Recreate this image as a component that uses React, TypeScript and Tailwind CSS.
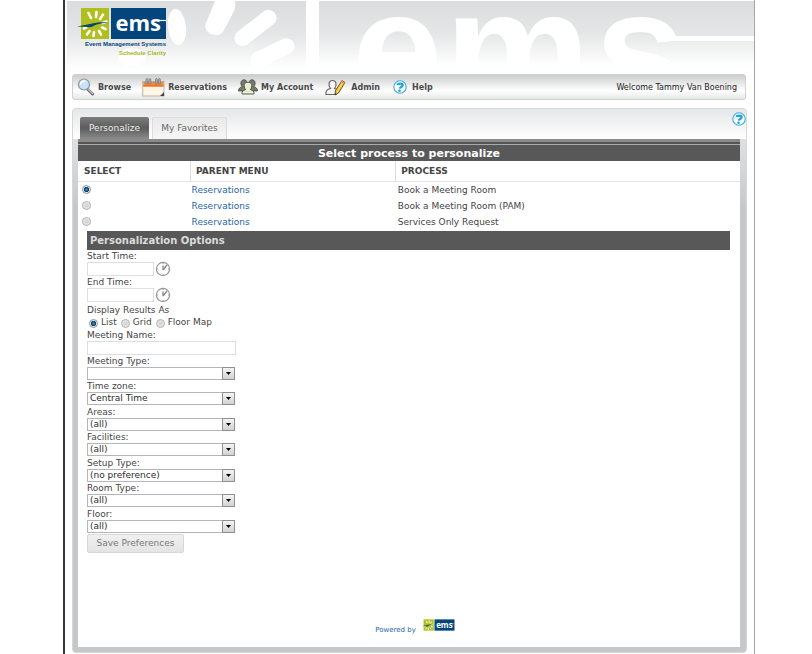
import React, { useId, useState } from "react";

const verdana = "font-['DejaVu_Sans',Verdana,sans-serif]";

function EmsMark({ className }: { className: string }) {
  return (
    <svg viewBox="0 0 90 33" className={className} aria-label="ems" role="img">
      <rect x="4" y="1" width="28" height="31" fill="#b1bf1e" />
      <rect x="34" y="1" width="55" height="31" fill="#04467b" />
      <g stroke="#fff" strokeWidth="2.6" strokeLinecap="round">
        <path d="M14 11l-2.500-5M19 10l.500-5M23 12l3-4.500M25.500 16l4-1.500M25 20.500l3.500 1.500M22 24l2 3.500M17 25l-.500 4M12.500 24l-2.500 3.500M9 20.500l-2 1" />
      </g>
      <path d="M0 19.500L13 17c5-1.300 10-2 19-1.600-7 .3-12 1.300-16.500 4.200-1.500 1-3 .9-4.500.4z" fill="#04467b" />
      <text x="38.500" y="24" fontSize="22" fontWeight="700" fill="#fff" fontFamily="'Open Sans', sans-serif">
        ems
      </text>
      <path d="M82 13.500h7" stroke="#fff" strokeWidth="1.200" />
    </svg>
  );
}

function Banner() {
  return (
    <svg className="absolute inset-x-0 top-px h-[73px] w-full" viewBox="65 1 689 73" preserveAspectRatio="xMinYMin slice" aria-hidden="true">
      <defs>
        <linearGradient id="sky" x1="0" y1="0" x2="0" y2="1">
          <stop offset="0" stopColor="#dbdcde" />
          <stop offset="0.500" stopColor="#e5e6e7" />
          <stop offset="1" stopColor="#ffffff" />
        </linearGradient>
      </defs>
      <rect x="67" y="1" width="239" height="68" fill="url(#sky)" />
      <rect x="319" y="1" width="435" height="65" fill="url(#sky)" />
      <g fill="#fff">
        <ellipse cx="177" cy="27" rx="9" ry="18" transform="rotate(-6 177 27)" />
        <path d="M215 1h20c1 4 0 8-2 12l-9 17c-3 6-9 6-13 4-4-2-7-5-5-11z" />
        <rect x="231" y="20" width="49" height="16" rx="8" transform="rotate(-38 255.500 28)" />
        <rect x="249" y="45" width="47" height="16" rx="8" transform="rotate(-26 272.500 53)" />
        <ellipse cx="132" cy="57" rx="14" ry="9" />
        <rect x="660" y="36" width="94" height="5" />
      </g>
      <text y="105" fontSize="163" fontWeight="700" fill="#fff" fontFamily="'Liberation Sans', Arial, sans-serif">
        <tspan x="352">e</tspan>
        <tspan x="445">m</tspan>
        <tspan x="595">s</tspan>
      </text>
    </svg>
  );
}

function MagnifierIcon() {
  return (
    <svg viewBox="0 0 18 18" className="h-[18px] w-[18px]" aria-hidden="true">
      <path d="M10.500 11l5 5" stroke="#666" strokeWidth="3" strokeLinecap="round" />
      <path d="M11 11l4.500 4.500" stroke="#c9c9c9" strokeWidth="1.200" strokeLinecap="round" />
      <circle cx="7" cy="6.500" r="5.500" fill="#c5e4f7" stroke="#8a9299" strokeWidth="1.200" />
      <path d="M3.500 6.500a3.500 3.500 0 0 1 5-3" stroke="#fff" strokeWidth="1.500" fill="none" />
    </svg>
  );
}

function CalendarIcon() {
  return (
    <svg viewBox="0 0 23 19" className="h-[19px] w-[23px]" aria-hidden="true">
      <rect x=".8" y="3.500" width="21.200" height="14.500" fill="#fdf6e6" stroke="#a9a59c" strokeWidth=".8" />
      <rect x="1.200" y="3.900" width="20.400" height="4.600" fill="#f5893c" />
      <rect x="1.200" y="7.200" width="20.400" height="1.300" fill="#ec6d21" />
      <path d="M22 14v4h-4z" fill="#444" />
      <g fill="#b9b9b9" stroke="#6f6f6f" strokeWidth=".7">
        <rect x="4" y=".6" width="1.800" height="5.500" rx=".9" />
        <rect x="7" y=".6" width="1.800" height="5.500" rx=".9" />
        <rect x="13.500" y=".6" width="1.800" height="5.500" rx=".9" />
        <rect x="16.500" y=".6" width="1.800" height="5.500" rx=".9" />
      </g>
    </svg>
  );
}

function PeopleIcon() {
  return (
    <svg viewBox="0 0 20 16" className="h-4 w-5" aria-hidden="true">
      <g fill="#77786f" stroke="#454545" strokeWidth=".8">
        <path d="M.500 12c0-3 2-3.500 3.500-4.500C1.800 4.500 3 .800 6 .800S9.800 4 8 7l2 5z" />
        <path d="M19.500 12c0-3-2-3.500-3.500-4.500C18.200 4.500 17 .800 14 .800S10.200 4 12 7l-2 5z" />
      </g>
      <path d="M4 15c-.5-3 1.500-3.600 3.600-4.300C5 7 6.300 3.200 10 3.200s5 3.800 2.400 7.500C14.500 11.400 16.500 12 16 15z" fill="#e6efd0" stroke="#5a5d50" strokeWidth="1" />
    </svg>
  );
}

function AdminIcon() {
  return (
    <svg viewBox="-1 0 24 17" className="h-[17px] w-6" aria-hidden="true">
      <path d="M1 15.500c-.6-4 1.500-5.500 4.500-6C2.800 5.500 4 1.500 7.500 1.500s5 4 2 8l2.500 1-1 5z" fill="#f5f5f5" stroke="#666" strokeWidth="1.200" />
      <path d="M17 1.500l3 2L13.500 14 10 16l.300-4z" fill="#f8b738" stroke="#59502f" strokeWidth=".9" />
      <path d="M17.500 4l-5.500 9" stroke="#ffe14a" strokeWidth="1.200" />
      <path d="M17 1.500l3 2-1 1.600-3-2z" fill="#e98a4a" />
      <path d="M10 16l.200-2 1.300 1z" fill="#222" />
    </svg>
  );
}

function HelpIcon() {
  return (
    <svg viewBox="0 0 14 14" className="h-[14px] w-[14px]" aria-hidden="true">
      <circle cx="7" cy="7" r="6.200" fill="#fff" stroke="#35aee2" strokeWidth="1.100" />
      <path d="M4.500 5C5 3 9.800 3 9.600 5.300 9.400 7 7.100 6.800 6.800 8.600" stroke="#1fa2dc" strokeWidth="2.300" fill="none" />
      <circle cx="6.500" cy="10.700" r="1.300" fill="#1fa2dc" />
    </svg>
  );
}

function ClockIcon() {
  return (
    <svg viewBox="0 0 16 16" className="h-4 w-4" aria-hidden="true">
      <circle cx="8" cy="8" r="6.600" fill="#fff" stroke="#999" strokeWidth="1.200" />
      <path d="M8 9V4.500M8 9l4-5" stroke="#888" strokeWidth="1.300" fill="none" />
      <path d="M8 2v1.200M8 13v1.200M2 8h1.200M13 8h1.200" stroke="#999" strokeWidth=".9" />
    </svg>
  );
}

function MenuLink({ icon, children }: { icon: React.ReactNode; children: string }) {
  return (
    <a href="#" className="flex items-center gap-[3px] text-[8px] font-bold text-[#4a4a4a]">
      {icon}
      <span className="pt-px">{children}</span>
    </a>
  );
}

function Radio({ name, label, checked, onChange }: { name: string; label: string; checked: boolean; onChange: () => void }) {
  return (
    <input
      type="radio"
      name={name}
      aria-label={label}
      checked={checked}
      onChange={onChange}
      className="block h-[9px] w-[9px] shrink-0 appearance-none rounded-full border border-[#b0b0b0] bg-[radial-gradient(circle,#d0d0d0,#f2f2f2)] checked:border-[#8b9299] checked:bg-[radial-gradient(circle,#2f86b5_15%,#0e3a5c_45%,#e6edf2_60%)]"
    />
  );
}

function TimeField({ label }: { label: string }) {
  const id = useId();
  return (
    <div className="h-[26px]">
      <label htmlFor={id} className="block h-3 leading-3">{label}</label>
      <div className="flex h-[14px] items-center gap-px">
        <input id={id} type="text" className="h-[14px] w-[67px] border border-[#dedfe4] bg-white px-1 text-[9px]" />
        <button type="button" aria-label={`Pick ${label}`} className="h-4 w-4">
          <ClockIcon />
        </button>
      </div>
    </div>
  );
}

function SelectField({ label, value }: { label: string; value: string }) {
  const id = useId();
  return (
    <div>
      <label htmlFor={id} className="block h-3 leading-3">{label}</label>
      <div className="relative w-[148px]">
        <select id={id} className="block h-[13px] w-full appearance-none border border-[#b4b5bb] bg-white pr-4 pl-[2px] text-[9px] leading-[11px] text-[#2c2c2c]">
          <option>{value}</option>
        </select>
        <span className="pointer-events-none absolute top-0 right-0 flex h-[13px] w-[13px] items-center justify-center border border-[#8e8f8f] bg-linear-to-b from-[#f4f4f4] to-[#d2d2d2]">
          <svg viewBox="0 0 5 3" className="h-[3px] w-[5px]" aria-hidden="true">
            <path d="M0 0h5L2.500 3z" fill="#000" />
          </svg>
        </span>
      </div>
    </div>
  );
}

const processes = ["Book a Meeting Room", "Book a Meeting Room (PAM)", "Services Only Request"];
const views = ["List", "Grid", "Floor Map"];
const filters = [
  ["Meeting Type:", ""],
  ["Time zone:", "Central Time"],
  ["Areas:", "(all)"],
  ["Facilities:", "(all)"],
  ["Setup Type:", "(no preference)"],
  ["Room Type:", "(all)"],
  ["Floor:", "(all)"],
];

export default function App() {
  const [process, setProcess] = useState(0);
  const [view, setView] = useState(0);

  return (
    <div className={`min-h-screen bg-white pr-[57px] pl-[63px] text-[9px] text-[#444] ${verdana}`}>
      <div className="flex min-h-screen flex-col border-r border-l-2 border-r-[#a6a6a6] border-l-[#353535]">
        <header className="relative h-[74px] overflow-hidden pt-[7px] pl-3">
          <Banner />
          <div className="relative w-[90px]">
            <EmsMark className="block h-[33px] w-[90px]" />
            <div className="pr-px text-right font-['Liberation_Sans',Arial,sans-serif] text-[6px] leading-[9px] font-bold whitespace-nowrap">
              <div className="text-[#04467b]">Event Management Systems</div>
              <div className="text-[#a9b61b]">Schedule Clarity</div>
            </div>
          </div>
        </header>

        <nav className="relative mr-2 ml-[7px] flex h-[26px] items-center gap-[11px] rounded-[3px] border border-[#cfd0d1] bg-linear-to-b from-[#cccdce] via-white via-65% to-[#e6e7e7] pr-2 pl-1">
          <MenuLink icon={<MagnifierIcon />}>Browse</MenuLink>
          <MenuLink icon={<CalendarIcon />}>Reservations</MenuLink>
          <MenuLink icon={<PeopleIcon />}>My Account</MenuLink>
          <MenuLink icon={<AdminIcon />}>Admin</MenuLink>
          <MenuLink icon={<span className="px-[2px]"><HelpIcon /></span>}>Help</MenuLink>
          <span className="ml-auto pt-px text-[8px] text-[#222]">Welcome Tammy Van Boening</span>
        </nav>

        <main className="mt-2 mr-[7px] mb-px ml-[7px] flex grow flex-col rounded-[4px] border border-[#d6d7d8] bg-[linear-gradient(#e6e7e8,#dcddde_40px,#c6c7c8_100px)] pr-[6px] pb-[5px] pl-[5px]">
          <div className="-mr-[6px] -ml-[5px] flex h-[30px] items-end gap-[3px] rounded-t-[4px] bg-linear-to-b from-[#e6e7e8] to-white pl-[7px]">
            <button type="button" className="h-[22px] w-[69px] rounded-t-[2px] bg-linear-to-b from-[#7d7d7d] via-[#5c5c5c] to-[#8c8c8c] pt-[2px] text-[#ededed]">
              Personalize
            </button>
            <button type="button" className="h-[22px] w-[75px] rounded-t-[2px] border border-b-0 border-[#dcdcdc] bg-linear-to-b from-[#e9e9e9] to-[#f6f6f6] pt-px text-[#666]">
              My Favorites
            </button>
            <a href="#" aria-label="Page help" className="mb-[13px] ml-auto">
              <HelpIcon />
            </a>
          </div>
          <div className="h-[6px] bg-[linear-gradient(#8a8a8a_50%,#555_50%_84%,#aaa_84%)]" />

          <section className="flex grow flex-col bg-white">
            <table className="w-full table-fixed border-collapse text-left">
              <caption className="h-4 bg-[#585858] text-center text-[11px] leading-[17px] font-bold text-white">
                Select process to personalize
              </caption>
              <colgroup>
                <col className="w-[17%]" />
                <col className="w-[31%]" />
                <col />
              </colgroup>
              <thead>
                <tr className="h-5 border-b border-[#e4e4e4]">
                  <th className="pt-[2px] pl-[6px] font-bold">SELECT</th>
                  <th className="border-l border-[#dcdcdc] pt-[2px] pl-[5px] font-bold">PARENT MENU</th>
                  <th className="border-l border-[#dcdcdc] pt-[2px] pl-[5px] font-bold">PROCESS</th>
                </tr>
              </thead>
              <tbody>
                {processes.map((name, i) => (
                  <tr key={name} className="h-4 leading-4">
                    <td className="pl-1">
                      <Radio name="process" label={name} checked={process === i} onChange={() => setProcess(i)} />
                    </td>
                    <td className="pl-px">
                      <a href="#" className="text-[#2764a8]">Reservations</a>
                    </td>
                    <td className="pl-[2px]">{name}</td>
                  </tr>
                ))}
              </tbody>
            </table>

            <form className="mr-[10px] ml-[9px] mt-px" onSubmit={(e) => e.preventDefault()}>
              <h2 className="h-[19px] bg-[#585858] pl-[3px] text-[10px] leading-[19px] font-bold text-[#dcdcdc]">Personalization Options</h2>
              <TimeField label="Start Time:" />
              <TimeField label="End Time:" />
              <fieldset className="pt-[2px]">
                <legend className="float-left h-3 w-full leading-3">Display Results As</legend>
                <div className="clear-both flex h-[13px] items-center gap-1 pt-[2px] pl-[2px]">
                  {views.map((name, i) => (
                    <label key={name} className="flex items-center gap-[3px]">
                      <Radio name="view" label={name} checked={view === i} onChange={() => setView(i)} />
                      {name}
                    </label>
                  ))}
                </div>
              </fieldset>
              <label htmlFor="meeting-name" className="block h-3 leading-3">Meeting Name:</label>
              <input id="meeting-name" type="text" className="block h-[14px] w-[149px] border border-[#dedfe4] bg-white px-1 text-[9px]" />
              <div className="flex h-[178px] flex-col justify-between">
                {filters.map(([label, value]) => (
                  <SelectField key={label} label={label} value={value} />
                ))}
              </div>
              <button type="submit" className="mt-px block h-[19px] w-[97px] rounded-[2px] border border-[#d8d8d8] bg-linear-to-b from-[#f0f0f0] to-[#e4e4e4] pt-[2px] text-[#777]">
                Save Preferences
              </button>
            </form>

            <footer className="mt-auto flex items-center justify-center gap-[6px] pb-3 pl-3 text-[7px]">
              <a href="#" className="pt-[10px] text-[#2764a8]">Powered by</a>
              <EmsMark className="h-3 w-[33px]" />
            </footer>
          </section>
        </main>
      </div>
    </div>
  );
}
